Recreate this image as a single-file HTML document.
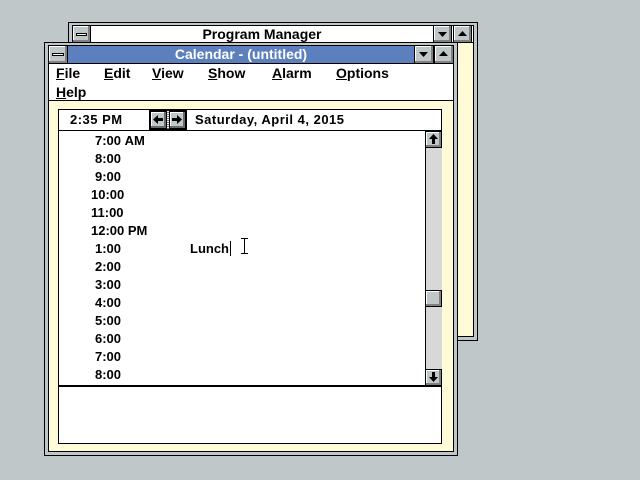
<!DOCTYPE html>
<html><head><meta charset="utf-8"><style>
*{margin:0;padding:0;box-sizing:border-box}
body{width:640px;height:480px;background:#c0c7c8;position:relative;overflow:hidden;font-family:"Liberation Sans",sans-serif;font-weight:bold;font-size:13px;color:#000}
.a{position:absolute}
.btn{position:absolute;background:#c0c7c8;border:1px solid #000;box-shadow:inset -2px -2px 0 #808080,inset 1px 1px 0 #fff}
u{text-decoration:underline}
</style></head><body>
<!-- Program Manager -->
<div class="a" style="left:68px;top:22px;width:410px;height:319px;background:#c0c7c8;border:1px solid #000"></div>
<div class="a" style="left:72px;top:25px;width:402px;height:312px;background:#fffbd8;border:1px solid #000"></div>
<div class="a" style="left:72px;top:25px;width:402px;height:18px;background:#fff;border:1px solid #000"></div>
<div class="btn" style="left:72px;top:25px;width:19px;height:18px"></div>
<div class="a" style="left:76px;top:33px;width:11px;height:3px;background:#fff;border:1px solid #000"></div>
<div class="a" style="left:92px;top:26px;width:340px;text-align:center;font-size:14px;line-height:17px">Program Manager</div>
<div class="btn" style="left:433px;top:25px;width:19px;height:18px"></div>
<svg class="a" style="left:438px;top:32px" width="9" height="5"><path d="M0 0H9L4.5 5Z"/></svg>
<div class="btn" style="left:453px;top:25px;width:19px;height:18px"></div>
<svg class="a" style="left:458px;top:31px" width="9" height="5"><path d="M0 5H9L4.5 0Z"/></svg>
<!-- Calendar -->
<div class="a" style="left:44px;top:42px;width:414px;height:414px;background:#c0c7c8;border:1px solid #000"></div>
<div class="a" style="left:48px;top:45px;width:406px;height:407px;background:#fffbd8;border:1px solid #000"></div>
<div class="a" style="left:48px;top:45px;width:406px;height:19px;background:#5c7fbd;border:1px solid #000"></div>
<div class="btn" style="left:48px;top:45px;width:20px;height:19px"></div>
<div class="a" style="left:52px;top:53px;width:12px;height:3px;background:#fff;border:1px solid #000"></div>
<div class="a" style="left:68px;top:46px;width:346px;text-align:center;color:#fff;font-size:14px;line-height:17px">Calendar - (untitled)</div>
<div class="btn" style="left:414px;top:45px;width:20px;height:19px"></div>
<svg class="a" style="left:419px;top:52px" width="9" height="5"><path d="M0 0H9L4.5 5Z"/></svg>
<div class="btn" style="left:434px;top:45px;width:20px;height:19px"></div>
<svg class="a" style="left:439px;top:51px" width="9" height="5"><path d="M0 5H9L4.5 0Z"/></svg>
<div class="a" style="left:49px;top:64px;width:404px;height:37px;background:#fff;border-bottom:1px solid #000"></div>
<div class="a" style="left:56px;top:65px;font-size:14px;line-height:17px"><u>F</u>ile</div>
<div class="a" style="left:104px;top:65px;font-size:14px;line-height:17px"><u>E</u>dit</div>
<div class="a" style="left:152px;top:65px;font-size:14px;line-height:17px"><u>V</u>iew</div>
<div class="a" style="left:208px;top:65px;font-size:14px;line-height:17px"><u>S</u>how</div>
<div class="a" style="left:272px;top:65px;font-size:14px;line-height:17px"><u>A</u>larm</div>
<div class="a" style="left:336px;top:65px;font-size:14px;line-height:17px"><u>O</u>ptions</div>
<div class="a" style="left:56px;top:84px;font-size:14px;line-height:17px"><u>H</u>elp</div>
<!-- inner -->
<div class="a" style="left:58px;top:109px;width:384px;height:335px;background:#fff;border:1px solid #000"></div>
<div class="a" style="left:58px;top:130px;width:384px;height:1px;background:#000"></div>
<div class="a" style="left:58px;top:385px;width:384px;height:2px;background:#000"></div>
<div class="a" style="left:70px;top:112px;line-height:16px;letter-spacing:0.5px">2:35 PM</div>
<div class="a" style="left:149px;top:110px;width:38px;height:20px;background:#000"></div>
<div class="btn" style="left:150px;top:111px;width:17px;height:18px;box-shadow:inset -2px -2px 0 #6a6a6a,inset 1px 1px 0 #fff"></div>
<svg class="a" style="left:153px;top:115px" width="10" height="9"><path d="M0 4.5L5 0V3H10V6H5V9Z"/></svg>
<div class="a" style="left:167px;top:111px;width:2px;height:18px;background:repeating-linear-gradient(#fff 0 1px,#808080 1px 2px)"></div>
<div class="btn" style="left:169px;top:111px;width:17px;height:18px;box-shadow:inset -2px -2px 0 #6a6a6a,inset 1px 1px 0 #fff"></div>
<svg class="a" style="left:172px;top:115px" width="10" height="9"><path d="M10 4.5L5 0V3H0V6H5V9Z"/></svg>
<div class="a" style="left:195px;top:112px;line-height:16px;letter-spacing:0.5px">Saturday, April 4, 2015</div>
<div class="a" style="left:0;top:132px;line-height:18px">
<div class="a" style="left:95px;top:0;white-space:nowrap">7:00&nbsp;AM</div>
<div class="a" style="left:95px;top:18px">8:00</div>
<div class="a" style="left:95px;top:36px">9:00</div>
<div class="a" style="left:91px;top:54px">10:00</div>
<div class="a" style="left:91px;top:72px">11:00</div>
<div class="a" style="left:91px;top:90px;white-space:nowrap">12:00&nbsp;PM</div>
<div class="a" style="left:95px;top:108px">1:00</div>
<div class="a" style="left:95px;top:126px">2:00</div>
<div class="a" style="left:95px;top:144px">3:00</div>
<div class="a" style="left:95px;top:162px">4:00</div>
<div class="a" style="left:95px;top:180px">5:00</div>
<div class="a" style="left:95px;top:198px">6:00</div>
<div class="a" style="left:95px;top:216px">7:00</div>
<div class="a" style="left:95px;top:234px">8:00</div>
<div class="a" style="left:190px;top:108px">Lunch</div>
</div>
<div class="a" style="left:230px;top:241px;width:1px;height:15px;background:#000"></div>
<svg class="a" style="left:240px;top:238px" width="9" height="16"><path d="M1 .5H8M4.5 .5V15.5M1 15.5H8" stroke="#000" fill="none"/></svg>
<!-- scrollbar -->
<div class="a" style="left:425px;top:131px;width:17px;height:255px;background:#d8d8d8;border-left:1px solid #000"></div>
<div class="btn" style="left:425px;top:131px;width:17px;height:17px"></div>
<svg class="a" style="left:429px;top:134px" width="9" height="10"><path d="M4.5 0L9 5H6V10H3V5H0Z"/></svg>
<div class="btn" style="left:425px;top:290px;width:17px;height:17px"></div>
<div class="btn" style="left:425px;top:369px;width:17px;height:17px"></div>
<svg class="a" style="left:429px;top:372px" width="9" height="10"><path d="M4.5 10L9 5H6V0H3V5H0Z"/></svg>
</body></html>
